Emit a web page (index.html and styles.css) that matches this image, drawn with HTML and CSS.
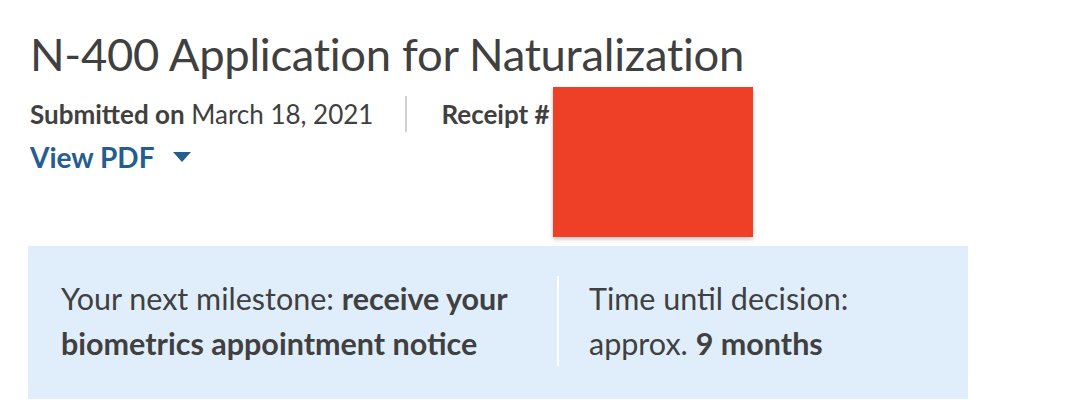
FILE: index.html
```html
<!DOCTYPE html>
<html lang="en">
<head>
    <meta charset="UTF-8">
    <meta name="viewport" content="width=device-width, initial-scale=1.0">
    <title>N-400 Case Status</title>
    <link rel="stylesheet" href="styles.css">
</head>
<body>

    <main class="case">
        <h1 class="case-title">N-400 Application for Naturalization</h1>

        <div class="case-meta">
            <span><strong>Submitted on</strong> March 18, 2021</span>
            <span class="meta-sep"></span>
            <span><strong>Receipt #</strong></span>
        </div>

        <a class="view-pdf" href="#">
            View PDF
            <svg class="caret" width="18" height="10" viewBox="0 0 18 10">
                <path d="M0 0 H18 L9 10 Z" fill="currentColor"/>
            </svg>
        </a>

        <div class="redact"></div>

        <section class="milestone">
            <div class="milestone-col">
                Your next milestone: <strong>receive your</strong><br>
                <strong>biometrics appointment notice</strong>
            </div>
            <div class="milestone-col milestone-time">
                Time until decision:<br>
                approx. <strong>9 months</strong>
            </div>
        </section>
    </main>

</body>
</html>
```

FILE: styles.css
```css
body {
    margin: 0;
    font-family: Lato, "Open Sans", sans-serif;
    color: #404040;
    background-color: #fff;
}

.case {
    position: relative;
    padding: 26px 28px 0;
    width: 940px;
}

.case-title {
    margin: 0;
    font-size: 45.4px;
    font-weight: 400;
    line-height: 56px;
    letter-spacing: -0.3px;
    padding-left: 2px;
}

.case-meta {
    display: flex;
    align-items: center;
    margin-top: 14px;
    padding-left: 2px;
    font-size: 26px;
    line-height: 36px;
}
.case-meta strong {
    font-weight: 700;
}
.meta-sep {
    width: 2px;
    height: 36px;
    background-color: #d0d0d0;
    margin: 0 34px 0 32px;
}

.view-pdf {
    display: inline-flex;
    align-items: center;
    gap: 18px;
    margin-top: 7px;
    padding-left: 2px;
    font-size: 28px;
    font-weight: 700;
    line-height: 36px;
    color: #245d8f;
    text-decoration: none;
}

.redact {
    position: absolute;
    left: 553px;
    top: 87px;
    width: 200px;
    height: 150px;
    background-color: #ee4027;
    box-shadow: 0 2px 4px rgba(0, 0, 0, 0.25);
}

.milestone {
    display: flex;
    margin-top: 71px;
    padding: 30px 0 33px 33px;
    background-color: #e0eefb;
    font-size: 30.5px;
    line-height: 45px;
}
.milestone strong {
    font-weight: 700;
}
.milestone-col {
    width: 464px;
    padding-right: 32px;
}
.milestone-time {
    width: auto;
    border-left: 2px solid #fff;
    padding-left: 30px;
}
```
